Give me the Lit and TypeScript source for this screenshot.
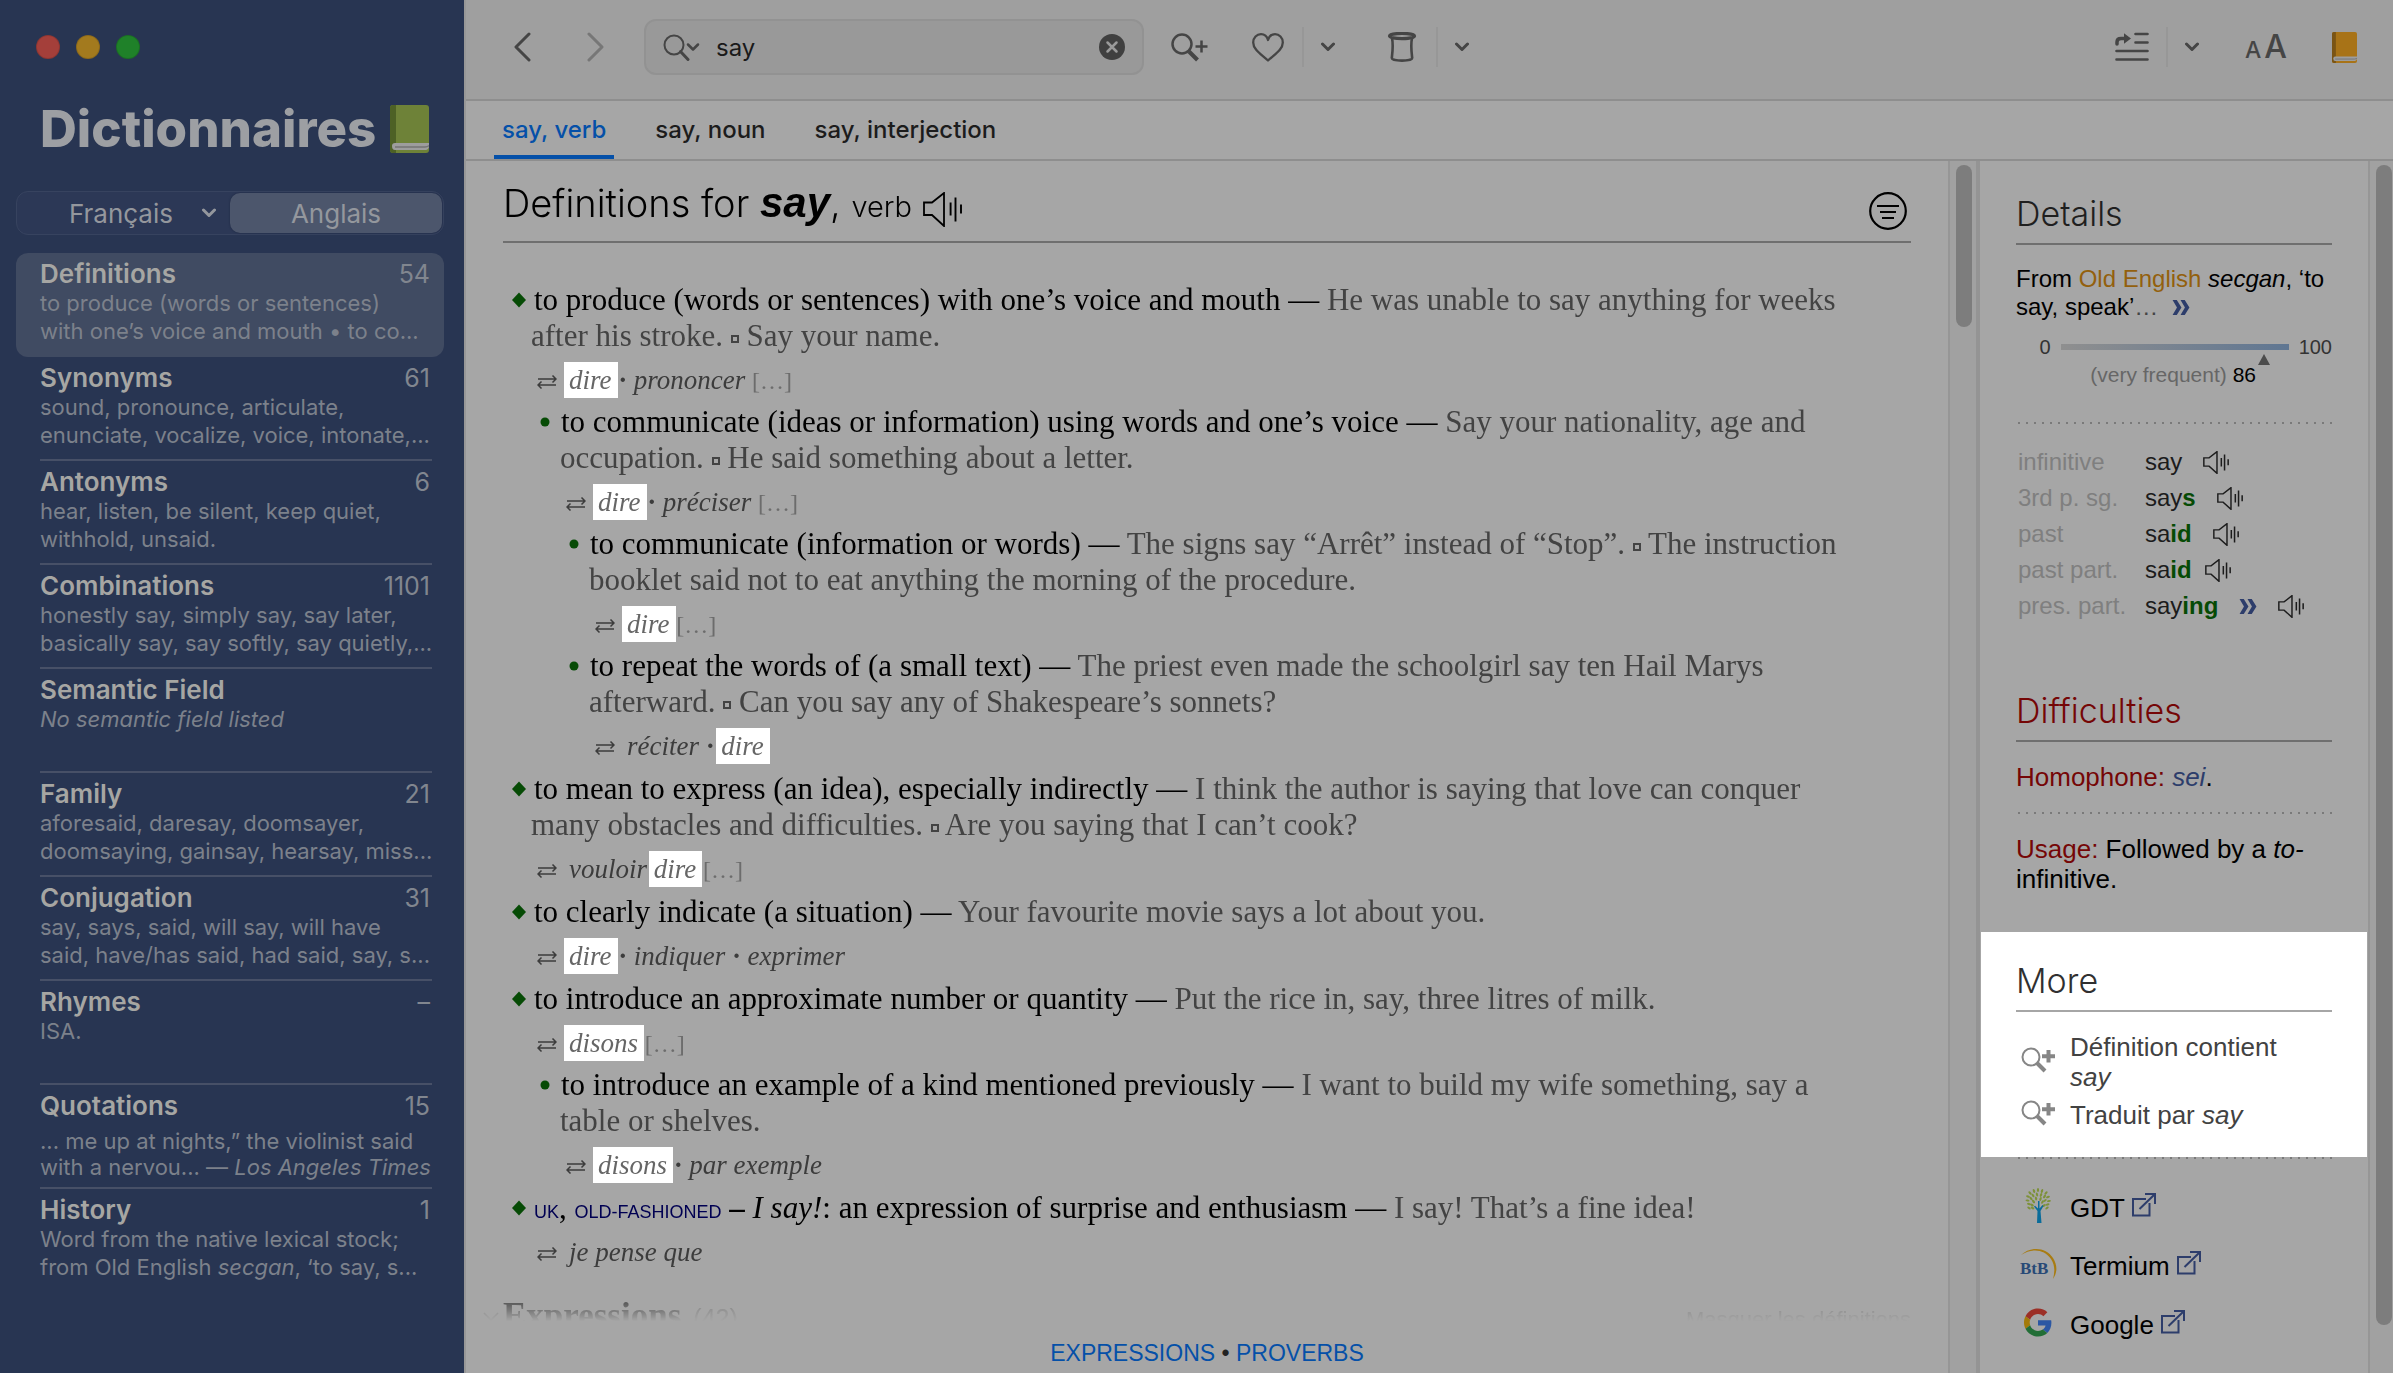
import { LitElement, html, css, svg, nothing, type TemplateResult } from "lit";
import { customElement, state } from "lit/decorators.js";
import { classMap } from "lit/directives/class-map.js";

interface Section {
  name: string;
  count: string;
  preview: TemplateResult;
  tight?: boolean;
}

interface Sense {
  level: number;
  body: TemplateResult;
  translation: TemplateResult;
}

const hit = (word: string) => html`<mark class="hit">${word}</mark>`;
const more = html`<span class="more-mark">[…]</span>`;
const ex = (text: unknown) => html`<span class="example">${text}</span>`;
const sq = html`<span class="square"></span>`;
const dot = html`<span class="dot">·</span>`;

const SECTIONS: Section[] = [
  { name: "Definitions", count: "54", preview: html`to produce (words or sentences)<br />with one’s voice and mouth • to co...` },
  { name: "Synonyms", count: "61", preview: html`sound, pronounce, articulate,<br />enunciate, vocalize, voice, intonate,...` },
  { name: "Antonyms", count: "6", preview: html`hear, listen, be silent, keep quiet,<br />withhold, unsaid.` },
  { name: "Combinations", count: "1101", preview: html`honestly say, simply say, say later,<br />basically say, say softly, say quietly,...` },
  { name: "Semantic Field", count: "", preview: html`<i>No semantic field listed</i>` },
  { name: "Family", count: "21", preview: html`aforesaid, daresay, doomsayer,<br />doomsaying, gainsay, hearsay, miss...` },
  { name: "Conjugation", count: "31", preview: html`say, says, said, will say, will have<br />said, have/has said, had said, say, s...` },
  { name: "Rhymes", count: "–", preview: html`ISA.` },
  { name: "Quotations", count: "15", tight: true, preview: html`... me up at nights,” the violinist said<br />with a nervou... — <i>Los Angeles Times</i>` },
  { name: "History", count: "1", preview: html`Word from the native lexical stock;<br />from Old English <i>secgan</i>, ‘to say, s...` },
];

const SENSES: Sense[] = [
  {
    level: 0,
    body: html`to produce (words or sentences) with one’s voice and mouth — ${ex(html`He was unable to say anything for weeks<br />after his stroke. ${sq} Say your name.`)}`,
    translation: html`${hit("dire")} ${dot} prononcer ${more}`,
  },
  {
    level: 1,
    body: html`to communicate (ideas or information) using words and one’s voice — ${ex(html`Say your nationality, age and<br />occupation. ${sq} He said something about a letter.`)}`,
    translation: html`${hit("dire")} ${dot} préciser ${more}`,
  },
  {
    level: 2,
    body: html`to communicate (information or words) — ${ex(html`The signs say “Arrêt” instead of “Stop”. ${sq} The instruction<br />booklet said not to eat anything the morning of the procedure.`)}`,
    translation: html`${hit("dire")} ${more}`,
  },
  {
    level: 2,
    body: html`to repeat the words of (a small text) — ${ex(html`The priest even made the schoolgirl say ten Hail Marys<br />afterward. ${sq} Can you say any of Shakespeare’s sonnets?`)}`,
    translation: html`réciter ${dot} ${hit("dire")}`,
  },
  {
    level: 0,
    body: html`to mean to express (an idea), especially indirectly — ${ex(html`I think the author is saying that love can conquer<br />many obstacles and difficulties. ${sq} Are you saying that I can’t cook?`)}`,
    translation: html`vouloir ${hit("dire")} ${more}`,
  },
  {
    level: 0,
    body: html`to clearly indicate (a situation) — ${ex("Your favourite movie says a lot about you.")}`,
    translation: html`${hit("dire")} ${dot} indiquer ${dot} exprimer`,
  },
  {
    level: 0,
    body: html`to introduce an approximate number or quantity — ${ex("Put the rice in, say, three litres of milk.")}`,
    translation: html`${hit("disons")} ${more}`,
  },
  {
    level: 1,
    body: html`to introduce an example of a kind mentioned previously — ${ex(html`I want to build my wife something, say a<br />table or shelves.`)}`,
    translation: html`${hit("disons")} ${dot} par exemple`,
  },
  {
    level: 0,
    body: html`<span class="label">UK</span>, <span class="label">OLD-FASHIONED</span> <b>–</b> <i>I say!</i>: an expression of surprise and enthusiasm — ${ex("I say! That’s a fine idea!")}`,
    translation: html`je pense que`,
  },
];

const speaker = (small = false) => html`<svg class=${small ? "speaker small" : "speaker"} viewBox="0 0 39 35" aria-hidden="true">
  <path d="M1 10.500H9L21 1V34L9 23H1Z" fill="none" stroke="currentColor" stroke-width=${small ? 2.2 : 1.8} />
  <path d="M27.600 10.500V23.500M32.500 5.500V29.500M38 12.500V21.500" fill="none" stroke="currentColor" stroke-width=${small ? 2.3 : 1.9} />
</svg>`;

const raquo = html`<svg class="raquo" viewBox="0 0 18 16" aria-hidden="true">
  <path d="M0 0H4.500L9.500 8L4.500 16H0L4.700 8ZM8.500 0H13L18 8L13 16H8.500L13.200 8Z" fill="currentColor" />
</svg>`;

const caret = html`<svg class="caret" viewBox="0 0 14 10" aria-hidden="true">
  <path d="M1.500 2L7 7.500L12.500 2" fill="none" stroke="currentColor" stroke-width="3" stroke-linecap="round" stroke-linejoin="round" />
</svg>`;

const swap = html`<svg class="swap" viewBox="0 0 20 14" aria-hidden="true">
  <path d="M1 4H19M15.500 .5L19 4L15.500 7.500M19 10H1M4.500 6.500L1 10L4.500 13.500" fill="none" stroke="currentColor" stroke-width="1.500" />
</svg>`;

const external = html`<svg class="external" viewBox="0 0 24 24" aria-hidden="true">
  <path d="M14 6H1V22.500H17.500V10M7.500 16L22.500 1.500M13 1H23V11" fill="none" stroke="currentColor" stroke-width="2" />
</svg>`;

const findMore = html`<svg class="find-more" viewBox="0 0 34 26" aria-hidden="true">
  <circle cx="10" cy="10" r="8.500" fill="none" stroke="currentColor" stroke-width="2" />
  <path d="M16 16L24 24" stroke="currentColor" stroke-width="4" />
  <path d="M27.500 3V15.500M21 9.200H34" stroke="currentColor" stroke-width="4" />
</svg>`;

const LEAVES = [
  [13, 2, 0], [9, 3, -20], [17, 3, 20], [5, 5, -45], [21, 5, 45], [12, 6.5, -15], [16, 7, 25], [8, 7.5, -30],
  [3, 8.5, -70], [23, 9, 70], [19.5, 8.5, 35], [6, 10.5, -40], [11, 10.5, -10], [15.5, 11, 20], [2.5, 12.5, -85],
  [20, 12.5, 50], [24, 13, 85], [8.5, 13.5, -35], [17.5, 14, 30], [4, 16, -75], [22.5, 16.5, 75], [7, 17, -60],
  [19, 17.5, 60], [4, 20, -50], [22, 20, 50], [7.5, 20, -60],
];

const treeLogo = html`<svg class="logo" viewBox="0 0 26 35" aria-hidden="true">
  ${LEAVES.map(([x, y, a]) => svg`<ellipse cx=${x} cy=${y} rx="1.100" ry="2" fill="#7d9139" transform="rotate(${a} ${x} ${y})" />`)}
  <path d="M12 35L12.500 23L9 18.500L10 17.800L13 20.500V13H14.500V20.500L17.500 17L18.500 18L15.500 23L16.500 35Z" fill="#0a6c9a" />
</svg>`;

const btbLogo = html`<svg class="logo wide" viewBox="0 0 38 32" aria-hidden="true">
  <path d="M1 7C11 -2 26 -1 33 10C38 18 37 25 33 31C35 24 35 17 31 11C24 1 12 0 1 7Z" fill="#a87c12" />
  <text x="0" y="26" font-family="Liberation Serif, serif" font-weight="700" font-size="17" fill="#284a77">BtB</text>
</svg>`;

const googleLogo = html`<svg class="logo" viewBox="0 0 48 48" aria-hidden="true">
  <path fill="#9c2f26" d="M24 9.500c3.540 0 6.710 1.220 9.210 3.600l6.850-6.850C35.900 2.380 30.470 0 24 0 14.620 0 6.510 5.380 2.560 13.220l7.980 6.190C12.430 13.720 17.740 9.500 24 9.500z" />
  <path fill="#2b57a3" d="M46.980 24.550c0-1.570-.15-3.090-.38-4.550H24v9.020h12.940c-.58 2.960-2.260 5.480-4.780 7.180l7.730 6c4.510-4.180 7.090-10.360 7.090-17.650z" />
  <path fill="#a37a08" d="M10.530 28.590c-.48-1.450-.76-2.990-.76-4.590s.27-3.140.76-4.590l-7.980-6.190C.92 16.460 0 20.120 0 24c0 3.880.92 7.540 2.560 10.780l7.970-6.190z" />
  <path fill="#226e36" d="M24 48c6.480 0 11.930-2.130 15.890-5.810l-7.730-6c-2.150 1.450-4.920 2.300-8.160 2.300-6.260 0-11.570-4.220-13.470-9.910l-7.980 6.190C6.510 42.620 14.620 48 24 48z" />
</svg>`;

const book = (cover: string, spine: string) => html`<svg class="book" viewBox="0 0 39 48" aria-hidden="true">
  <rect width="39" height="48" rx="3" fill=${cover} />
  <path d="M6 0H3Q0 0 0 3V45Q0 48 3 48H6Z" fill=${spine} />
  <path d="M39 38H5Q2 38 2 41Q2 45 5 45H36Q39 44 39 41Z" fill="#9d9d9d" />
  <path d="M39 40.500Q38 42 35 42H5" fill="none" stroke="#747474" stroke-width="1.500" />
</svg>`;

@customElement("app-root")
export class AppRoot extends LitElement {
  @state() private section = "Definitions";
  @state() private tab = "say, verb";

  static styles = css`
    :host {
      --page: #a6a6a6;
      --bar: #9f9f9f;
      --line: #8e8e8e;
      --navy: #283552;
      --link: #0550a8;
      --accent: #2d3d6b;
      --sans: "Liberation Sans", Arial, sans-serif;
      --ui: Inter, "Liberation Sans", sans-serif;
      --serif: "Liberation Serif", "Times New Roman", serif;
      display: block;
      color: #000;
      font-family: var(--sans);
    }
    * { box-sizing: border-box; }
    button, input { font: inherit; color: inherit; background: none; border: 0; padding: 0; margin: 0; }
    button { cursor: pointer; }
    a { color: inherit; text-decoration: none; }
    ul, h1, h2, p { margin: 0; padding: 0; list-style: none; font-weight: inherit; }
    svg { display: block; flex: none; }

    .window { display: flex; height: 100vh; overflow: hidden; background: var(--page); }

    /* sidebar */
    .sidebar { flex: none; width: 464px; background: var(--navy); padding: 35px 20px 0 16px; font-family: var(--ui); }
    .lights { display: flex; gap: 16px; padding-left: 20px; }
    .light { width: 24px; height: 24px; border-radius: 50%; border: 1px solid #00000022; }
    .close { background: #a43f3a; }
    .minimise { background: #a37a1e; }
    .zoom { background: #1f8129; }
    .brand { display: flex; align-items: center; justify-content: space-between; margin-top: 40px; padding: 0 15px 0 24px; font-size: 51px; line-height: 60px; font-weight: 800; color: #9d9fa3; }
    .brand .book { width: 39px; height: 48px; }
    .languages { display: flex; height: 44px; margin-top: 32px; padding: 1px; border: 1px solid #37435f; border-radius: 12px; background: #2c3856; font-size: 26px; color: #94979d; }
    .languages button { display: flex; align-items: center; justify-content: center; border-radius: 10px; }
    .languages .french { flex: 1; justify-content: flex-end; gap: 29px; padding-right: 14px; }
    .languages .chosen { flex: none; width: 212px; background: #4c566c; box-shadow: 0 0 2px #1c2640; }
    .sections { margin-top: 18px; }
    .section { display: block; width: 100%; height: 104px; padding: 0 12px 0 24px; border-radius: 12px; text-align: left; }
    .section.selected { background: #404b62; }
    .section-body { display: block; height: 100%; padding: 6px 2px 0 0; border-bottom: 2px solid #475067; }
    .selected .section-body, li:last-child .section-body { border-color: transparent; }
    .section-title { display: flex; justify-content: space-between; font-size: 26px; line-height: 30px; font-weight: 600; color: #a6a6a3; }
    .count { font-size: 25px; font-weight: 400; color: #81868f; }
    .preview { display: block; font-size: 22px; line-height: 28px; white-space: nowrap; color: #7c818b; }
    .preview.tight { padding-top: 7px; line-height: 26px; }

    /* toolbar */
    .main { display: flex; flex-direction: column; flex: 1; min-width: 0; border-left: 2px solid #979797; }
    .toolbar { display: flex; align-items: center; height: 101px; padding: 0 25px 5px 32px; border-bottom: 2px solid var(--line); background: var(--bar); color: #454545; font-family: var(--ui); }
    .tool { display: flex; align-items: center; justify-content: center; width: 48px; height: 48px; }
    .history { display: flex; gap: 26px; margin-right: 24px; }
    .history .off { color: #777; }
    .search { display: flex; align-items: center; width: 500px; height: 56px; padding: 0 17px; border: 2px solid #929292; border-radius: 12px; background: #999; }
    .search input { flex: 1; min-width: 0; margin-left: 16px; font-size: 24px; color: #1a1a1a; outline: none; }
    .find { margin: 0 31px 0 21px; }
    .pair { display: flex; align-items: center; margin-right: 38px; }
    .pair .drop { width: 24px; height: 48px; display: flex; align-items: center; justify-content: center; }
    .rule { width: 2px; height: 40px; margin: 0 12px 0 10px; background: #979797; }
    .caret { width: 14px; height: 10px; }
    .spacer { flex: 1; }
    .size { align-items: baseline; gap: 3px; margin-right: 30px; font-size: 23px; line-height: 48px; font-weight: 500; }
    .size .large { font-size: 32px; }
    .toolbar .book { width: 25px; height: 31px; }

    .tabs { display: flex; gap: 33px; height: 60px; padding-left: 28px; border-bottom: 2px solid var(--line); font-family: var(--ui); }
    .tab { height: 58px; padding: 3px 8px 0; border-bottom: 4px solid transparent; font-size: 24px; font-weight: 500; color: #1c1c1c; }
    .tab.current { color: var(--link); border-color: var(--link); }

    /* article */
    .columns { display: flex; flex: 1; min-height: 0; }
    .reader { display: flex; flex-direction: column; flex: 1; min-width: 0; }
    .article { flex: 1; min-height: 0; padding: 18px 37px 0; overflow: hidden; mask-image: linear-gradient(to top, transparent, #000 28px); }
    .headline { display: flex; align-items: flex-end; padding-bottom: 11px; border-bottom: 2px solid #6f6f6f; }
    .headline h1 { flex: 1; height: 51px; font-family: var(--ui); font-weight: 300; font-size: 38px; line-height: 48px; white-space: nowrap; }
    .headline b { font-family: var(--sans); font-size: 42px; line-height: 1; font-weight: 700; font-style: italic; }
    .headline .pos { font-size: 29px; }
    .say { display: inline-block; padding-top: 6px; vertical-align: middle; }
    .filter { padding-right: 4px; }
    .speaker { width: 39px; height: 35px; }
    .speaker.small { width: 26px; height: 23px; }
    .senses { margin-top: 39px; font-family: var(--serif); font-size: 31px; }
    .sense { display: grid; grid-template-columns: 28px 1fr; white-space: nowrap; }
    .sense + .level-0 { margin-top: 1px; }
    .level-1 { padding-left: 29px; }
    .level-2 { padding-left: 58px; }
    .bullet { width: 28px; height: 36px; color: #064b05; }
    .meaning { line-height: 36px; text-indent: 3px; }
    .level-1 .meaning, .level-2 .meaning { text-indent: 1px; }
    .example { color: #434343; }
    .square { display: inline-block; width: 8px; height: 8px; border: 2px solid #434343; vertical-align: middle; }
    .label { font-family: var(--sans); font-size: 18px; line-height: 1; color: #000052; }
    .translation { grid-column: 2; display: flex; align-items: center; gap: 12px; height: 50px; padding: 8px 0 6px 6px; color: #3c3c3c; }
    .swap { width: 20px; height: 14px; margin-top: 4px; }
    .words { font-style: italic; font-size: 27px; line-height: 36px; }
    .dot { margin: 0 1px; font-weight: 700; }
    .hit { display: inline-block; height: 36px; margin: 0 -6px 0 -5px; padding: 0 6px 0 5px; background: #fff; color: #666; }
    .more-mark { font-style: normal; font-size: 24px; line-height: 1; color: #6c6c6c; }
    .group { position: relative; display: flex; align-items: baseline; gap: 12px; margin-top: 20px; line-height: 40px; }
    .group .fold { position: absolute; left: -20px; top: 16px; width: 16px; height: 10px; }
    .group h2 { font-family: var(--serif); font-size: 35px; font-weight: 700; color: #333; }
    .group .total { flex: 1; font-size: 25px; color: #777; }
    .group button { font-size: 22px; line-height: 1; color: #777; }
    .jump { height: 52px; padding-top: 16px; text-align: center; font-size: 23px; line-height: 32px; color: #222; }
    .jump a { color: var(--link); }

    .track { flex: none; padding-top: 4px; border-left: 2px solid #969696; background: #a1a1a1; }
    .track .thumb { display: block; width: 16px; margin-left: 6px; border-radius: 8px; background: #7d7d7d; }
    .track.inner { width: 28px; }
    .track.outer { width: 25px; }
    .inner .thumb { height: 162px; }
    .outer .thumb { height: 96%; }

    /* details */
    .details { flex: none; width: 392px; padding: 34px 36px 0; border-left: 4px solid #949494; overflow: hidden; }
    .details h2 { padding-bottom: 10px; border-bottom: 2px solid #6f6f6f; font-family: var(--ui); font-size: 34px; line-height: 38px; font-weight: 300; color: #1f1f1f; }
    .origin { margin-top: 20px; font-size: 24px; line-height: 28px; white-space: nowrap; }
    .origin a { color: #93600d; }
    .origin .dots { color: #444; }
    .raquo { display: inline-block; width: 18px; height: 15px; color: var(--accent); }
    .scale { display: flex; align-items: center; justify-content: flex-end; gap: 10px; margin-top: 14px; font-size: 20px; line-height: 24px; color: #333; }
    .bar { position: relative; width: 228px; height: 6px; background: linear-gradient(to right, #8f8f8f, #5f7692); }
    .bar::after { content: ""; position: absolute; top: 10px; left: 89%; margin-left: -6px; border: 6px solid transparent; border-top: 0; border-bottom: 11px solid #4c4c4c; }
    .frequency { margin-top: 4px; padding-right: 76px; font-size: 21px; line-height: 24px; text-align: right; color: #666; }
    .frequency b { font-weight: 400; color: #000; }
    .dotted { height: 2px; margin-left: 2px; background: repeating-linear-gradient(to right, #7a7a7a 0 2px, transparent 2px 8px); }
    .frequency + .dotted { margin-top: 35px; }
    .forms { margin: 20px 0 68px 2px; border-collapse: collapse; font-size: 24px; line-height: 36px; white-space: nowrap; }
    .forms th { width: 127px; padding: 0; text-align: left; font-weight: 400; color: #7f7f7f; }
    .forms td { padding: 0; color: #1c1c1c; }
    .form { display: flex; align-items: center; gap: 21px; height: 36px; }
    .form.near { gap: 13px; }
    .form b { color: #064b05; }
    .warning h2 { color: #750606; }
    .warning p { margin-top: 20px; font-size: 26px; line-height: 30px; white-space: nowrap; }
    .warning .dotted { margin-top: 20px; }
    .warning strong { font-weight: 400; color: #750606; }
    .warning a { color: var(--accent); font-style: italic; }
    .extra { margin: 38px -35px 0; padding: 30px 35px 27px; background: #fff; color: #424242; }
    .extra h2 { border-color: #a6a6a6; color: #303030; }
    .links { display: flex; flex-direction: column; font-size: 26px; line-height: 30px; }
    .extra .links { gap: 8px; margin-top: 20px; }
    .external-links { gap: 28px; margin-top: 33px; }
    .links a { display: grid; grid-template-columns: 54px 1fr; align-items: center; }
    .extra a { color: #424242; }
    .find-more { width: 34px; height: 26px; margin: -4px 0 0 5px; color: #868686; }
    .named { display: flex; align-items: center; gap: 7px; }
    .external { width: 24px; height: 24px; margin-bottom: 6px; color: var(--accent); }
    .logo { width: 28px; height: 35px; margin: -4px 0 0 8px; }
    .logo.wide { width: 38px; height: 32px; margin-left: 4px; }
  `;

  private renderSection(s: Section) {
    return html`<li>
      <button class=${classMap({ section: true, selected: s.name === this.section })} @click=${() => (this.section = s.name)}>
        <span class="section-body">
          <span class="section-title"><span>${s.name}</span><span class="count">${s.count}</span></span>
          <span class=${classMap({ preview: true, tight: !!s.tight })}>${s.preview}</span>
        </span>
      </button>
    </li>`;
  }

  private renderSense(s: Sense) {
    return html`<li class="sense level-${s.level}">
      <svg class="bullet" viewBox="0 0 28 36" aria-hidden="true">
        ${s.level === 0 ? svg`<path d="M16 10.500L23 18L16 25.500L9 18Z" fill="currentColor" />` : svg`<circle cx="13" cy="18" r="4.500" fill="currentColor" />`}
      </svg>
      <p class="meaning">${s.body}</p>
      <div class="translation">${swap}<span class="words">${s.translation}</span></div>
    </li>`;
  }

  private renderForm(label: string, stem: string, ending: string, near = false, linked = false) {
    return html`<tr>
      <th scope="row">${label}</th>
      <td>
        <span class=${classMap({ form: true, near })}><span>${stem}<b>${ending}</b></span>${linked ? html`<a href="#form" aria-label=${stem + ending}>${raquo}</a>` : nothing}<button aria-label="Listen">${speaker(true)}</button></span>
      </td>
    </tr>`;
  }

  render() {
    return html`<div class="window">
      <nav class="sidebar">
        <div class="lights"><span class="light close"></span><span class="light minimise"></span><span class="light zoom"></span></div>
        <div class="brand"><span>Dictionnaires</span>${book("#6e8238", "#4d6125")}</div>
        <div class="languages">
          <button class="french">Français ${caret}</button>
          <button class="chosen">Anglais</button>
        </div>
        <ul class="sections">${SECTIONS.map((s) => this.renderSection(s))}</ul>
      </nav>

      <main class="main">
        <header class="toolbar">
          <div class="history">
            <button class="tool" aria-label="Back"><svg width="18" height="30" viewBox="0 0 18 30"><path d="M16 2L3 15L16 28" fill="none" stroke="currentColor" stroke-width="3" stroke-linecap="round" stroke-linejoin="round" /></svg></button>
            <button class="tool off" aria-label="Forward"><svg width="18" height="30" viewBox="0 0 18 30"><path d="M2 2L15 15L2 28" fill="none" stroke="currentColor" stroke-width="3" stroke-linecap="round" stroke-linejoin="round" /></svg></button>
          </div>
          <label class="search">
            <svg width="37" height="27" viewBox="0 0 37 27" aria-hidden="true"><circle cx="11" cy="11" r="9.500" fill="none" stroke="currentColor" stroke-width="2" /><path d="M17.500 17.500L25 25.500" stroke="currentColor" stroke-width="3" stroke-linecap="round" /><path d="M25 10.500L30 15.500L35 10.500" fill="none" stroke="currentColor" stroke-width="2.500" stroke-linecap="round" stroke-linejoin="round" /></svg>
            <input type="text" aria-label="Search" .value=${"say"} />
            <button aria-label="Clear"><svg width="26" height="26" viewBox="0 0 26 26"><circle cx="13" cy="13" r="13" fill="#404040" /><path d="M8.500 8.500L17.500 17.500M17.500 8.500L8.500 17.500" stroke="#9a9a9a" stroke-width="2.500" stroke-linecap="round" /></svg></button>
          </label>
          <button class="tool find" aria-label="Advanced search"><svg width="37" height="29" viewBox="0 0 37 29"><circle cx="11" cy="11" r="9.500" fill="none" stroke="currentColor" stroke-width="2.500" /><path d="M18 18.500L26.500 27" stroke="currentColor" stroke-width="4" /><path d="M30.500 7.500V19.500M24.500 13.500H36.500" stroke="currentColor" stroke-width="2.500" /></svg></button>
          <div class="pair">
            <button class="tool" aria-label="Favourite"><svg width="32" height="29" viewBox="0 0 32 29"><path d="M16 27.500C9 21 1.200 16.500 1.200 9.500C1.200 4.500 4.800 1.200 9 1.200C12.500 1.200 15 3.500 16 7C17 3.500 19.500 1.200 23 1.200C27.200 1.200 30.800 4.500 30.800 9.500C30.800 16.500 23 21 16 27.500Z" fill="none" stroke="currentColor" stroke-width="2.300" stroke-linejoin="round" /></svg></button>
            <span class="rule"></span>
            <button class="drop" aria-label="Favourites">${caret}</button>
          </div>
          <div class="pair">
            <button class="tool" aria-label="Collection"><svg width="30" height="30" viewBox="0 0 30 30"><ellipse cx="15" cy="4" rx="12.500" ry="2.600" fill="none" stroke="currentColor" stroke-width="3.200" /><path d="M5 6C6.500 13 5.500 20 4.800 26C5 29.500 25 29.500 25.200 26C24.500 20 23.500 13 25 6" fill="none" stroke="currentColor" stroke-width="2.600" /></svg></button>
            <span class="rule"></span>
            <button class="drop" aria-label="Collections">${caret}</button>
          </div>
          <span class="spacer"></span>
          <div class="pair">
            <button class="tool" aria-label="Go to"><svg width="34" height="30" viewBox="0 0 34 30"><path d="M20.500 2H32.500M20.500 10.500H32.500M1.500 19H32.500M1.500 27.500H32.500" stroke="currentColor" stroke-width="2.600" stroke-linecap="round" /><path d="M2 12V10Q2 6.500 6 6.500H9" fill="none" stroke="currentColor" stroke-width="3.500" stroke-linecap="round" /><path d="M9 1.200L16 6.500L9 11.800Z" fill="currentColor" /></svg></button>
            <span class="rule"></span>
            <button class="drop" aria-label="Sections">${caret}</button>
          </div>
          <button class="tool size" aria-label="Text size"><span>A</span><span class="large">A</span></button>
          <button class="tool" aria-label="Guide">${book("#a87317", "#7a5414")}</button>
        </header>

        <div class="tabs" role="tablist">
          ${["say, verb", "say, noun", "say, interjection"].map(
            (t) => html`<button role="tab" aria-selected=${t === this.tab} class=${classMap({ tab: true, current: t === this.tab })} @click=${() => (this.tab = t)}>${t}</button>`
          )}
        </div>

        <div class="columns">
          <section class="reader">
            <article class="article">
              <div class="headline">
                <h1>Definitions for <b>say</b>, <span class="pos">verb</span> <button class="say" aria-label="Listen">${speaker()}</button></h1>
                <button class="filter" aria-label="Filter"><svg width="38" height="38" viewBox="0 0 38 38"><circle cx="19" cy="19" r="17.800" fill="none" stroke="currentColor" stroke-width="2.200" /><path d="M8 14H30M11 20H27M13 26H25" stroke="currentColor" stroke-width="2.200" /></svg></button>
              </div>
              <ul class="senses">${SENSES.map((s) => this.renderSense(s))}</ul>
              <div class="group">
                <svg class="fold" viewBox="0 0 16 10" aria-hidden="true"><path d="M1 1L8 8L15 1" fill="none" stroke="#777" stroke-width="1.500" /></svg>
                <h2>Expressions</h2><span class="total">(42)</span><button>Masquer les définitions</button>
              </div>
            </article>
            <footer class="jump"><a href="#expressions">EXPRESSIONS</a> • <a href="#proverbs">PROVERBS</a></footer>
          </section>
          <div class="track inner"><span class="thumb"></span></div>

          <aside class="details">
            <h2>Details</h2>
            <p class="origin">From <a href="#old-english">Old English</a> <i>secgan</i>, ‘to<br />say, speak’<span class="dots">…</span>&nbsp; <a href="#history" aria-label="History">${raquo}</a></p>
            <div class="scale"><span>0</span><span class="bar"></span><span>100</span></div>
            <p class="frequency">(very frequent) <b>86</b></p>
            <div class="dotted"></div>
            <table class="forms">
              <tbody>
                ${this.renderForm("infinitive", "say", "")}
                ${this.renderForm("3rd p. sg.", "say", "s")}
                ${this.renderForm("past", "sa", "id")}
                ${this.renderForm("past part.", "sa", "id", true)}
                ${this.renderForm("pres. part.", "say", "ing", false, true)}
              </tbody>
            </table>
            <section class="warning">
              <h2>Difficulties</h2>
              <p><strong>Homophone:</strong> <a href="#sei">sei</a>.</p>
              <div class="dotted"></div>
              <p><strong>Usage:</strong> Followed by a <i>to-</i><br />infinitive.</p>
            </section>
            <section class="extra">
              <h2>More</h2>
              <div class="links">
                <a href="#contains">${findMore}<span>Définition contient<br /><i>say</i></span></a>
                <a href="#translated">${findMore}<span>Traduit par <i>say</i></span></a>
              </div>
            </section>
            <div class="dotted"></div>
            <div class="links external-links">
              <a href="#gdt">${treeLogo}<span class="named">GDT ${external}</span></a>
              <a href="#termium">${btbLogo}<span class="named">Termium ${external}</span></a>
              <a href="#google">${googleLogo}<span class="named">Google ${external}</span></a>
            </div>
          </aside>
          <div class="track outer"><span class="thumb"></span></div>
        </div>
      </main>
    </div>`;
  }
}
